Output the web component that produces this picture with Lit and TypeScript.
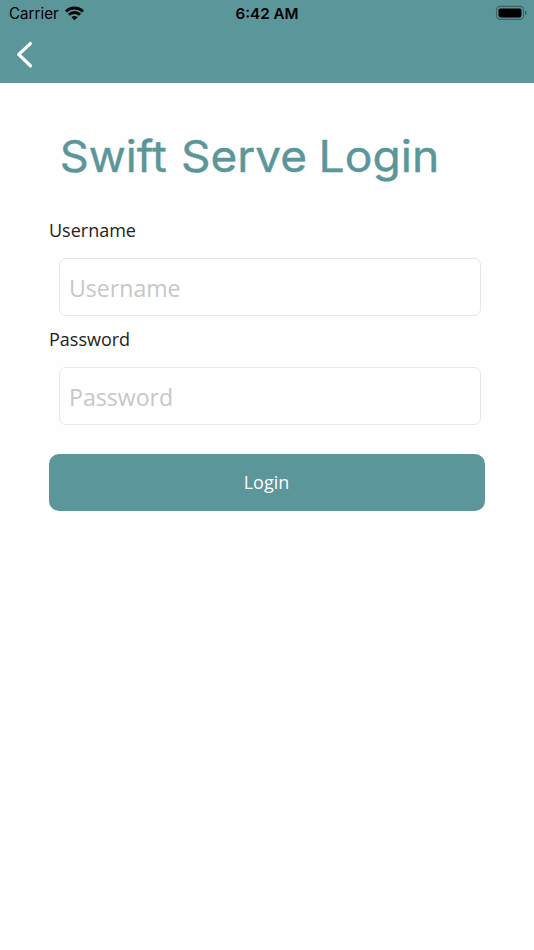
import { LitElement, html, css, svg } from "lit";
import { customElement } from "lit/decorators.js";

const titleWords = [
  { text: "Swift", x: 59.8, width: 107 },
  { text: "Serve", x: 181, width: 126 },
  { text: "Login", x: 318.6, width: 120.6 },
];

@customElement("app-root")
export class AppRoot extends LitElement {
  static styles = css`
    :host {
      display: flex;
      flex-direction: column;
      height: 950px;
      background: #fefefe;
      font-family: "Open Sans", sans-serif;
      color: #222;
    }
    * { box-sizing: border-box; }
    .top { height: 83px; background: #5b969b; color: #000; flex: none; }
    .status {
      height: 28px;
      display: grid;
      grid-template-columns: 1fr auto 1fr;
      align-items: center;
      padding: 0 7px 0 9px;
      font: 400 15.2px/28px Inter, sans-serif;
    }
    .carrier { display: flex; align-items: center; gap: 6px; }
    .carrier svg { margin-top: -1px; }
    .time { font-weight: 600; margin-right: 2px; }
    .battery { justify-self: end; margin-top: -2px; }
    svg { display: block; }
    .nav { height: 55px; display: flex; align-items: flex-start; padding: 13px 0 0 16px; }
    .title { margin: 37px 0 0; height: 80px; font: 400 43.8px Inter, sans-serif; }
    .form { display: flex; flex-direction: column; padding: 0 49px; }
    label { font-size: 18px; line-height: 26px; margin-top: 17px; }
    .second { margin-top: 10px; }
    input {
      margin: 15px 4px 0 10px;
      height: 58px;
      border: 1px solid #e6e6e6;
      border-radius: 7px;
      padding: 1px 9px 0;
      background: #fff;
      font: 400 23.1px "Open Sans", sans-serif;
      outline: none;
    }
    input::placeholder { color: #c7c7c7; opacity: 1; }
    button {
      margin: 29px 0 0;
      height: 57px;
      border: 0;
      border-radius: 10px;
      background: #5b969b;
      color: #fff;
      font: 400 18px "Open Sans", sans-serif;
      padding: 0 1px 1px 0;
    }
  `;

  render() {
    return html`
      <header class="top">
        <div class="status">
          <div class="carrier">
            <span>Carrier</span>
            <svg width="19" height="15" viewBox="0 0 20 15" fill="none" stroke="#000" stroke-width="3">
              <path d="M1 5.4a12.8 12.8 0 0 1 18 0M4.1 8.9a8.4 8.4 0 0 1 11.8 0" />
              <path d="M10 14.5L6.7 11.4a4.7 4.7 0 0 1 6.6 0Z" fill="#000" stroke="none" />
            </svg>
          </div>
          <span class="time">6:42 AM</span>
          <svg class="battery" width="32" height="16" viewBox="0 0 32 16">
            <rect x="1.5" y="1.4" width="27" height="13" rx="3.6" fill="none" stroke="#3b6367" stroke-width="1.1" />
            <rect x="3.5" y="3.4" width="23" height="9" rx="1.8" />
            <path d="M30 5.8q1.8.6 1.8 2.2t-1.8 2.2z" fill="#3b6367" />
          </svg>
        </div>
        <nav class="nav">
          <svg width="18" height="28" viewBox="0 0 18 28" fill="none" stroke="#fff" stroke-width="3.3" stroke-linecap="round" stroke-linejoin="round">
            <path d="M14.4 2.6L2.7 13.4L14.4 24.8" />
          </svg>
        </nav>
      </header>
      <h1 class="title">
        <svg width="534" height="80" fill="#5b969b" stroke="#5b969b" stroke-width="0.4">
          ${titleWords.map((w) => svg`<text x=${w.x} y="51.5" textLength=${w.width} lengthAdjust="spacingAndGlyphs">${w.text}</text>`)}
        </svg>
      </h1>
      <form class="form">
        <label for="user">Username</label>
        <input id="user" placeholder="Username" />
        <label class="second" for="pass">Password</label>
        <input id="pass" type="password" placeholder="Password" />
        <button type="button">Login</button>
      </form>
    `;
  }
}
